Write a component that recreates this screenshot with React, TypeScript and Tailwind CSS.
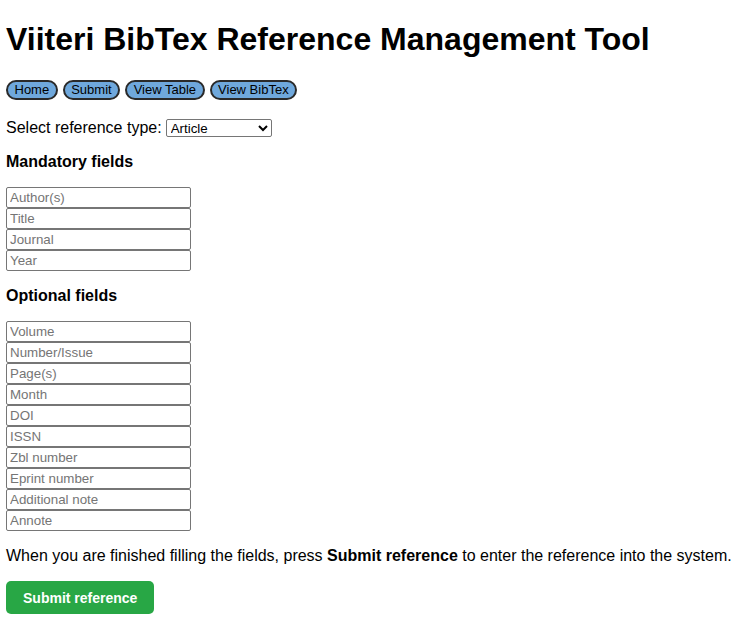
import { useState } from 'react';

const mandatory = ['Author(s)', 'Title', 'Journal', 'Year'];
const optional = [
  'Volume',
  'Number/Issue',
  'Page(s)',
  'Month',
  'DOI',
  'ISSN',
  'Zbl number',
  'Eprint number',
  'Additional note',
  'Annote',
];

const navItems = ['Home', 'Submit', 'View Table', 'View BibTex'];

function Field({ placeholder }: { placeholder: string }) {
  return (
    <input
      type="text"
      placeholder={placeholder}
      className="block h-[21px] w-[185px] rounded-[2px] border border-[#767676] bg-white px-[3px] text-[13.33px] text-black placeholder:text-[#757575]"
    />
  );
}

export default function App() {
  const [type, setType] = useState('article');

  return (
    <div className="min-h-screen bg-white px-1.5 font-['Liberation_Sans',Arial,sans-serif] text-black">
      {/* Header */}
      <h1 className="pt-[21px] text-[32px] leading-[37px] font-bold">
        Viiteri BibTex Reference Management Tool
      </h1>

      {/* Nav */}
      <nav className="mt-[22px] flex h-5 gap-[5px]">
        {navItems.map((item) => (
          <button
            key={item}
            className="h-5 rounded-full border-2 border-[#2a2a2a] bg-[#6fa8dc] px-[6.5px] pb-px text-[13px] leading-none text-black"
          >
            {item}
          </button>
        ))}
      </nav>

      {/* Reference type */}
      <div className="mt-[19px] flex h-[18px] items-center gap-1 text-base">
        <label htmlFor="type" className="-mt-px">Select reference type:</label>
        <select
          id="type"
          value={type}
          onChange={(e) => setType(e.target.value)}
          className="h-[18px] w-[106px] rounded-[2px] border border-[#767676] bg-white text-[13.33px]"
        >
          <option value="article">Article</option>
          <option value="book">Book</option>
          <option value="inproceedings">Inproceedings</option>
        </select>
      </div>

      <h3 className="mt-4 text-base leading-[18px] font-bold">Mandatory fields</h3>
      <div className="mt-4 flex flex-col">
        {mandatory.map((f) => (
          <Field key={f} placeholder={f} />
        ))}
      </div>

      <h3 className="mt-4 text-base leading-[18px] font-bold">Optional fields</h3>
      <div className="mt-4 flex flex-col">
        {optional.map((f) => (
          <Field key={f} placeholder={f} />
        ))}
      </div>

      <p className="mt-4 text-base leading-[18px]">
        When you are finished filling the fields, press <b>Submit reference</b> to enter
        the reference into the system.
      </p>

      <button className="mt-4 h-[33px] rounded-[5px] bg-[#28a745] px-[17px] text-sm font-bold text-white">
        Submit reference
      </button>
    </div>
  );
}
